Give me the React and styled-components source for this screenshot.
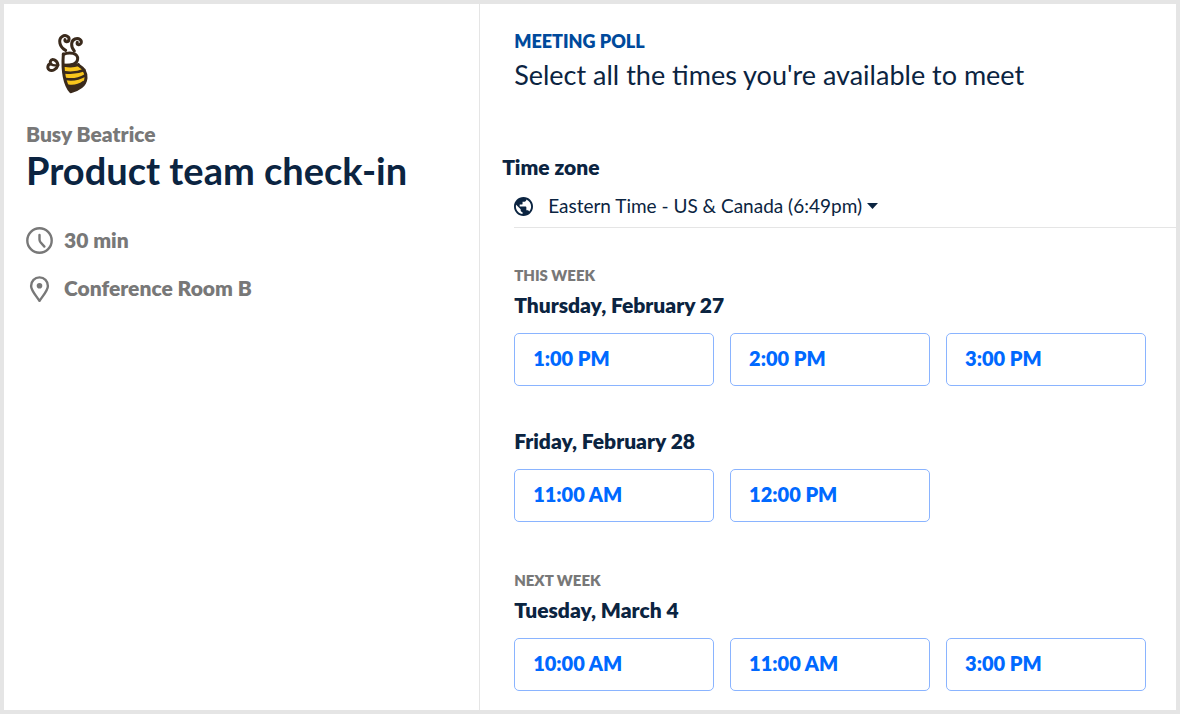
import React from 'react';
import styled, { createGlobalStyle } from 'styled-components';

const GlobalStyle = createGlobalStyle`
  * {
    box-sizing: border-box;
  }

  body {
    margin: 0;
    background: #fff;
    color: #0b2441;
    font-family: Lato, 'Open Sans', sans-serif;
  }

  h1, h2, h3, p, ul {
    margin: 0;
    padding: 0;
  }
`;

const Page = styled.div`
  display: grid;
  grid-template-columns: 13fr 19fr;
  min-height: 100vh;
  border: 4px solid #e5e5e5;
`;

const Sidebar = styled.aside`
  padding: 22px;
  border-right: 1px solid #e5e5e5;
`;

const BeeLogo = styled.svg`
  display: block;
  width: 64px;
  height: 76px;
  margin: 0 0 20px 10px;
`;

const Organizer = styled.p`
  color: #787878;
  font-size: 21px;
  font-weight: 800;
  line-height: 24px;
`;

const EventTitle = styled.h1`
  font-size: 38px;
  font-weight: 700;
  line-height: 48px;
  white-space: nowrap;
`;

const Details = styled.ul`
  display: flex;
  flex-direction: column;
  gap: 20px;
  margin-top: 32px;
  list-style: none;
`;

const Detail = styled.li`
  display: flex;
  align-items: center;
  gap: 10px;
  color: #787878;
  font-size: 21px;
  font-weight: 800;
  line-height: 28px;

  svg {
    flex: none;
    width: 28px;
    height: 28px;
  }
`;

const Poll = styled.main`
  padding: 25px 0 16px 34px;
`;

const Eyebrow = styled.p`
  color: #004a9c;
  font-size: 18px;
  font-weight: 800;
  line-height: 24px;
`;

const PollTitle = styled.h2`
  margin-top: 4px;
  font-size: 27px;
  font-weight: 400;
  line-height: 36px;
`;

const ZoneField = styled.div`
  margin-top: 62px;
  border-bottom: 1px solid #e5e5e5;
`;

const ZoneLabel = styled.label`
  display: block;
  margin-left: -12px;
  font-size: 21px;
  font-weight: 800;
  line-height: 24px;
`;

const ZoneRow = styled.div`
  display: flex;
  align-items: center;
  padding: 15px 0 9px;

  svg {
    flex: none;
  }
`;

const ZoneSelect = styled.select`
  field-sizing: content;
  height: 24px;
  margin: 0 5px 0 15px;
  padding: 0;
  border: 0;
  background: none;
  color: inherit;
  font-family: inherit;
  font-size: 19px;
  line-height: 24px;
  appearance: none;
`;

const Week = styled.section`
  margin-top: ${props => (props.$first ? '37px' : '48px')};
  padding-right: 30px;
`;

const WeekLabel = styled.p`
  margin-bottom: 6px;
  color: #787878;
  font-size: 15px;
  font-weight: 800;
  line-height: 20px;
`;

const Day = styled.div`
  & + & {
    margin-top: 41px;
  }
`;

const DayTitle = styled.h3`
  margin-bottom: 14px;
  font-size: 21px;
  font-weight: 800;
  line-height: 28px;
`;

const Slots = styled.div`
  display: grid;
  grid-template-columns: repeat(3, 1fr);
  gap: 16px;
`;

const SlotButton = styled.button`
  height: 53px;
  padding: 0 18px 4px;
  border: 1px solid #8ab4ff;
  border-radius: 5px;
  background: #fff;
  color: #0069ff;
  font-family: inherit;
  font-size: 20px;
  font-weight: 800;
  text-align: left;
  cursor: pointer;
`;

const weeks = [
  {
    label: 'THIS WEEK',
    days: [
      { title: 'Thursday, February 27', times: ['1:00 PM', '2:00 PM', '3:00 PM'] },
      { title: 'Friday, February 28', times: ['11:00 AM', '12:00 PM'] },
    ],
  },
  {
    label: 'NEXT WEEK',
    days: [
      { title: 'Tuesday, March 4', times: ['10:00 AM', '11:00 AM', '3:00 PM'] },
    ],
  },
];

const Bee = () => (
  <BeeLogo viewBox="0 0 192 228" fill="none" aria-hidden="true">
    {/* striped body */}
    <path
      d="M84 118 C98 120 112 120 126 117 C142 126 150 140 149 158 C147 178 127 192 104 197 C91 181 84 154 84 118 Z"
      fill="#f8c51c"
    />
    <g stroke="#3a2a1c" strokeWidth="9" strokeLinecap="round" strokeLinejoin="round">
      <path d="M82 84 C79 126 82 170 104 197 C128 192 148 178 150 156 C151 140 142 126 127 117" />
      <path d="M82 85 C102 76 126 82 125 99 C124 112 110 118 85 118" />
      <path d="M85 118 C102 121 116 120 127 116" />
      <path d="M87 139 C108 142 130 138 145 132" strokeWidth="8" />
      <path d="M90 159 C112 163 134 156 148 148" strokeWidth="8" />
      <path d="M97 178 C114 181 130 176 142 167 C134 183 120 190 105 193 Z" fill="#3a2a1c" strokeWidth="5" />
      {/* antennae */}
      <path d="M89 73 C70 63 66 41 78 32 C88 25 101 31 99 41 C97 50 84 48 87 41" />
      <path d="M115 75 C103 61 105 44 117 39 C129 35 139 43 135 52 C131 59 120 56 124 49" />
      {/* wing */}
      <path d="M66 117 C63 101 48 96 43 106 C42 109 43 112 45 114 C35 113 33 126 39 131 C49 137 62 130 66 117 Z" />
      <path d="M45 115 C52 119 59 119 66 117" strokeWidth="7" />
    </g>
  </BeeLogo>
);

const ClockIcon = () => (
  <svg viewBox="0 0 28 28" fill="none" stroke="#787878" aria-hidden="true">
    <circle cx="13.5" cy="14.5" r="12.2" strokeWidth="2.4" />
    <path d="M13.5 9 V13.5 Q13.5 15 14.5 16.2 L18.4 20.6" strokeWidth="2.4" strokeLinecap="round" />
  </svg>
);

const PinIcon = () => (
  <svg viewBox="0 0 28 28" fill="none" aria-hidden="true">
    <path
      d="M13.5 27 C10.5 22 5.1 16.7 5.1 12 C5.1 7 8.7 3.4 13.5 3.4 C18.3 3.4 21.9 7 21.9 12 C21.9 16.7 16.5 22 13.5 27 Z"
      stroke="#787878"
      strokeWidth="2.4"
      strokeLinejoin="round"
    />
    <circle cx="13.5" cy="11.7" r="2.8" fill="#787878" />
  </svg>
);

const GlobeIcon = () => (
  <svg width="19" height="19" viewBox="2 2 20 20" fill="#0b2441" aria-hidden="true">
    <path d="M12 2C6.48 2 2 6.48 2 12s4.48 10 10 10 10-4.48 10-10S17.52 2 12 2zm-1 17.93c-3.95-.49-7-3.85-7-7.93 0-.62.08-1.21.21-1.79L9 15v1c0 1.1.9 2 2 2v1.93zm6.9-2.54c-.26-.81-1-1.39-1.9-1.39h-1v-3c0-.55-.45-1-1-1H8v-2h2c.55 0 1-.45 1-1V7h2c1.1 0 2-.9 2-2v-.41c2.93 1.19 5 4.06 5 7.41 0 2.08-.8 3.97-2.1 5.39z" />
  </svg>
);

const CaretIcon = () => (
  <svg width="11" height="6" viewBox="0 0 11 6" fill="#0b2441" aria-hidden="true">
    <path d="M0 0 H11 L5.5 6 Z" />
  </svg>
);

const App = () => {
  return (
    <>
      <GlobalStyle />
      <Page>
        <Sidebar>
          <Bee />
          <Organizer>Busy Beatrice</Organizer>
          <EventTitle>Product team check-in</EventTitle>
          <Details>
            <Detail>
              <ClockIcon />
              30 min
            </Detail>
            <Detail>
              <PinIcon />
              Conference Room B
            </Detail>
          </Details>
        </Sidebar>

        <Poll>
          <Eyebrow>MEETING POLL</Eyebrow>
          <PollTitle>Select all the times you're available to meet</PollTitle>

          <ZoneField>
            <ZoneLabel htmlFor="timezone">Time zone</ZoneLabel>
            <ZoneRow>
              <GlobeIcon />
              <ZoneSelect id="timezone" defaultValue="eastern">
                <option value="eastern">Eastern Time - US &amp; Canada (6:49pm)</option>
              </ZoneSelect>
              <CaretIcon />
            </ZoneRow>
          </ZoneField>

          {weeks.map((week, i) => (
            <Week key={week.label} $first={i === 0}>
              <WeekLabel>{week.label}</WeekLabel>
              {week.days.map(day => (
                <Day key={day.title}>
                  <DayTitle>{day.title}</DayTitle>
                  <Slots>
                    {day.times.map(time => (
                      <SlotButton key={time} type="button">{time}</SlotButton>
                    ))}
                  </Slots>
                </Day>
              ))}
            </Week>
          ))}
        </Poll>
      </Page>
    </>
  );
};

export default App;
